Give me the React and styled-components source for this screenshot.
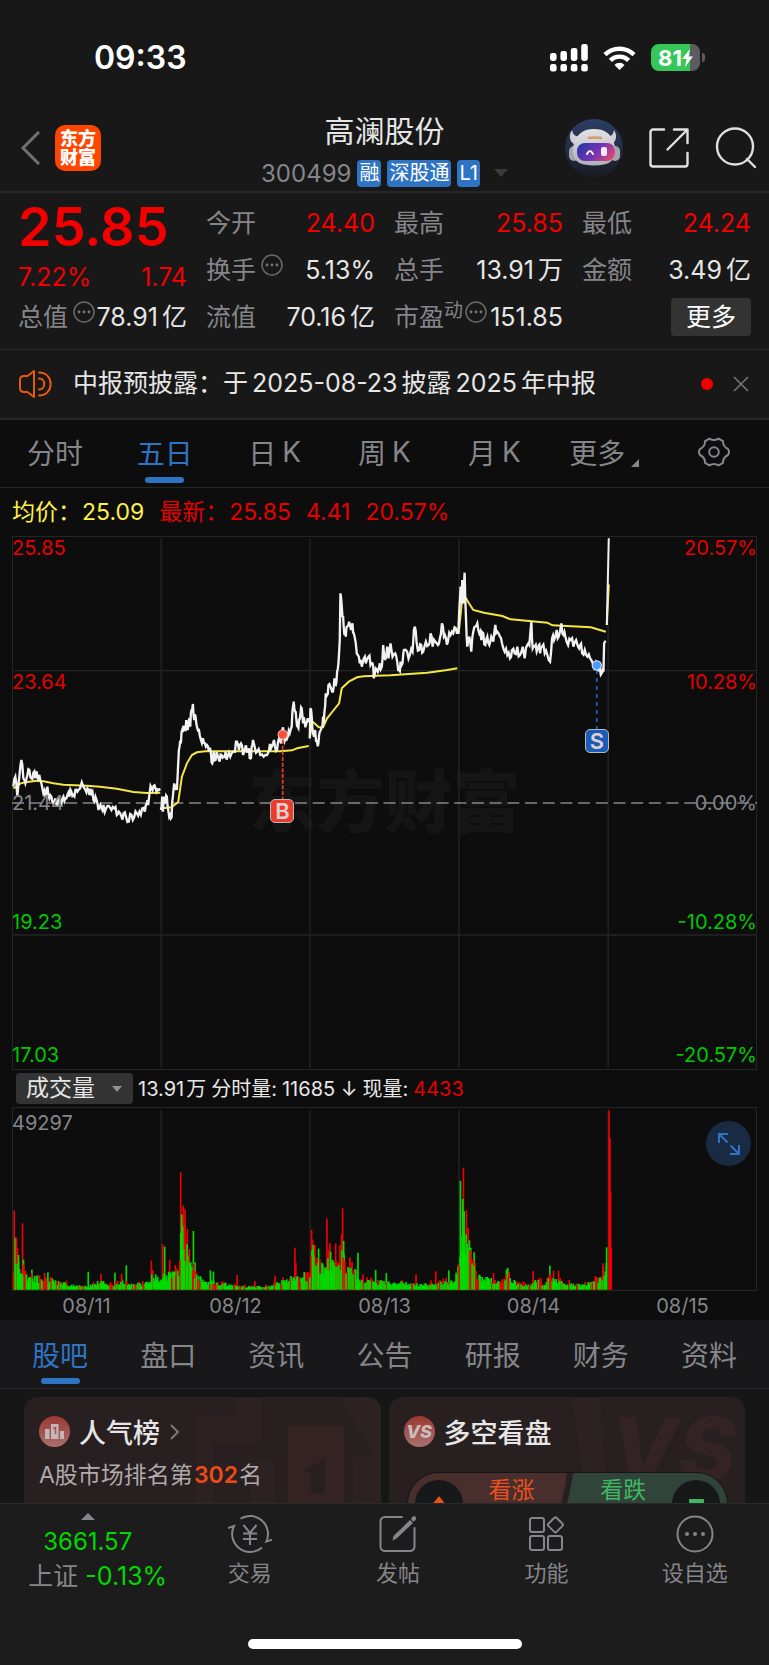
import React from 'react'
import styled, { createGlobalStyle } from 'styled-components'

const GlobalStyle = createGlobalStyle`
    * {
        box-sizing: border-box;
    }

    body {
        margin: 0;
        background-color: #0d0d0d;
        color: #e6e6e6;
        font-family: Inter, 'Noto Sans CJK SC', sans-serif;
    }

    button, select {
        font: inherit;
        color: inherit;
        border: none;
        background: none;
        padding: 0;
        margin: 0;
    }

    svg {
        display: block;
    }
`;

/* ---------- data ---------- */

const periods = [['分时'], ['五日'], ['日', 'K'], ['周', 'K'], ['月', 'K'], ['更多']];
const sections = ['股吧', '盘口', '资讯', '公告', '研报', '财务', '资料'];
const days = ['08/11', '08/12', '08/13', '08/14', '08/15'];

const quotes = [
    { label: '今开', value: '24.40', red: true },
    { label: '最高', value: '25.85', red: true },
    { label: '最低', value: '24.24', red: true },
    { label: '换手', value: '5.13%', more: true },
    { label: '总手', value: '13.91', unit: '万' },
    { label: '金额', value: '3.49', unit: '亿' },
];

// price lines, one string of x,y pairs per trading day
const priceDays = [
    '40,770 46,740 52,800 58,740 64,690 70,745 76,760 82,735 88,720 94,745 100,728 106,745 112,735 118,735 124,760 130,790 136,800 142,770 148,805 154,800 160,820 166,805 172,825 178,815 184,820 190,800 196,805 202,795 208,800 214,785 220,795 226,780 232,785 240,775 250,770 256,780 262,775 268,795 274,790 280,810 286,800 292,820 298,830 304,835 310,825 318,835 326,828 334,840 342,835 350,855 356,845 364,860 370,850 378,862 386,875 394,855 402,862 410,850 418,845 426,835 434,845 440,820 444,825 448,790 454,775 460,768 466,775 472,778 480,776',
    '482,840 486,800 488,845 492,800 496,815 500,800 504,840 510,855 514,862 518,800 522,760 526,770 530,780 534,700 538,650 542,640 546,600 550,590 554,600 558,570 562,600 566,570 570,590 574,540 578,522 582,570 586,560 590,590 596,600 602,630 608,625 614,640 620,645 626,665 632,670 636,700 640,665 646,690 652,675 658,695 664,675 670,680 676,665 682,680 690,680 698,665 704,665 710,635 716,660 722,640 728,675 734,655 740,665 746,655 750,685 754,650 758,630 764,655 770,665 780,675 790,680 800,675 806,660 812,655 818,640 824,650 830,660 836,625 842,640 846,600 850,615 856,625 862,620 868,610 874,590 876,545 880,515 884,545 888,570 892,590 896,570 900,555 904,535 908,580 912,570 918,580 922,565 926,570',
    '928,625 930,535 934,560 938,610 944,600 950,635 954,640 958,605 964,590 968,560 970,580 974,530 976,490 980,495 984,465 990,470 995,485 1000,470 1002,445 1006,465 1010,425 1014,400 1018,330 1020,190 1024,230 1028,260 1032,315 1036,320 1040,290 1046,275 1052,300 1056,280 1060,310 1066,340 1072,375 1078,400 1084,410 1090,385 1096,400 1104,380 1110,405 1116,400 1120,445 1126,415 1132,425 1138,400 1144,410 1148,345 1154,390 1160,350 1164,385 1170,340 1176,380 1184,370 1190,395 1196,420 1200,395 1206,400 1210,360 1220,365 1228,375 1236,365 1240,300 1243,290 1248,335 1256,360 1262,345 1268,365 1276,335 1284,345 1290,310 1296,350 1304,335 1312,345 1318,325 1324,280 1330,320 1336,325 1342,335 1350,315 1358,310 1366,295 1372,297',
    '1373,310 1376,240 1380,170 1383,220 1385,150 1388,220 1392,128 1396,260 1400,350 1406,320 1412,365 1418,305 1424,290 1430,280 1436,310 1442,330 1448,310 1454,345 1460,320 1466,345 1472,320 1478,335 1484,285 1490,305 1498,320 1504,340 1512,365 1520,375 1528,385 1534,360 1542,370 1550,350 1558,375 1566,350 1572,385 1580,345 1586,345 1592,275 1596,355 1602,350 1608,365 1614,345 1618,370 1624,350 1632,370 1640,375 1648,395 1654,325 1660,330 1668,300 1674,320 1682,280 1688,315 1694,320 1702,345 1710,330 1718,350 1726,330 1732,350 1738,345 1744,370 1752,360 1760,380 1768,385 1776,400 1784,400 1790,425 1796,410 1804,428 1808,425 1810,340 1815,333',
];

const averageDays = [
    '40,775 50,770 62,760 76,757 110,752 130,754 160,760 190,764 260,767 300,770 350,776 400,786 440,789 480,788',
    '486,835 514,832 534,816 545,740 560,700 575,675 590,667 615,664 840,664 875,661 890,655 925,648',
    '928,625 936,575 942,580 955,592 968,592 980,565 1000,540 1016,520 1024,475 1045,455 1070,442 1090,439 1170,436 1280,428 1340,420 1370,415',
    '1374,312 1384,215 1396,205 1405,220 1418,240 1450,248 1505,258 1530,268 1640,278 1655,286 1770,292 1815,305',
    '1818,285 1824,163',
];

// [x, height] of the usual volume along the five days
const volumeLevels = [
    [40, 60], [46, 120], [58, 90], [70, 80], [80, 40], [140, 38], [180, 26], [210, 16], [260, 10], [300, 28],
    [330, 16], [370, 26], [400, 16], [440, 22], [456, 52], [480, 42], [500, 50], [535, 60], [542, 220], [555, 140],
    [575, 70], [590, 44], [620, 26], [670, 20], [720, 11], [800, 11], [850, 28], [880, 42], [900, 36], [925, 50],
    [936, 130], [950, 90], [975, 70], [990, 110], [1004, 65], [1025, 115], [1040, 75], [1070, 54], [1090, 30], [1150, 26],
    [1200, 24], [1250, 18], [1310, 22], [1360, 30], [1374, 70], [1382, 240], [1396, 160], [1412, 110], [1425, 50], [1460, 34],
    [1500, 26], [1520, 44], [1545, 22], [1585, 14], [1600, 32], [1630, 20], [1650, 42], [1680, 24], [1750, 16], [1790, 34],
    [1810, 54], [1818, 90],
];

const volumePeaks = [
    [42, 237, 'r'], [45, 156, 'g'], [52, 125, 'r'], [55, 104, 'g'], [67, 199, 'r'], [70, 90, 'g'], [95, 60, 'g'], [143, 52, 'g'], [264, 54, 'g'],
    [302, 48, 'r'], [344, 51, 'g'], [364, 48, 'r'], [378, 73, 'g'], [453, 87, 'r'], [487, 136, 'r'], [493, 129, 'g'], [508, 90, 'r'],
    [525, 74, 'r'], [541, 352, 'r'], [544, 226, 'g'], [549, 252, 'r'], [554, 240, 'r'], [551, 200, 'r'], [561, 182, 'r'], [560, 136, 'g'],
    [567, 122, 'r'], [579, 176, 'g'], [584, 82, 'g'], [630, 58, 'g'], [639, 54, 'g'], [710, 44, 'r'], [763, 26, 'r'], [824, 42, 'r'],
    [883, 126, 'r'], [886, 80, 'r'], [911, 53, 'g'], [933, 179, 'r'], [936, 150, 'r'], [938, 134, 'g'], [954, 123, 'g'], [979, 213, 'r'],
    [985, 118, 'r'], [990, 114, 'g'], [1005, 138, 'r'], [1026, 244, 'r'], [1023, 165, 'r'], [1029, 146, 'g'], [1072, 111, 'g'],
    [1125, 59, 'g'], [1157, 50, 'g'], [1246, 46, 'r'], [1305, 55, 'r'], [1344, 58, 'g'], [1373, 76, 'r'], [1379, 326, 'g'], [1388, 366, 'r'],
    [1386, 272, 'g'], [1390, 235, 'g'], [1397, 238, 'r'], [1406, 148, 'g'], [1410, 126, 'g'], [1420, 112, 'g'], [1478, 50, 'r'], [1521, 65, 'g'],
    [1517, 60, 'g'], [1597, 56, 'r'], [1647, 72, 'g'], [1658, 58, 'r'], [1673, 57, 'r'], [1806, 79, 'r'], [1817, 127, 'g'],
    [1824, 538, 'r'], [1827, 455, 'r'], [1829, 293, 'r'], [1831, 127, 'r'],
];

// repeatable noise between 0 and 1
const noise = (n) => {
    const v = Math.sin(n * 127.1 + 11.7) * 43758.5453;
    return v - Math.floor(v);
};

const roughen = (line) => {
    const pts = line.split(' ').map((p) => p.split(',').map(Number));
    const out = [];
    pts.forEach(([x, y], i) => {
        out.push(`${x},${y}`);
        const next = pts[i + 1];
        if (next && next[0] - x >= 4) {
            const mid = (y + next[1]) / 2 + (noise(x) - 0.5) * 34;
            out.push(`${(x + next[0]) / 2},${Math.round(mid)}`);
        }
    });
    return out.join(' ');
};

const levelAt = (x) => {
    const i = volumeLevels.findIndex((l) => l[0] >= x);
    if (i < 1) return volumeLevels[0][1];
    const [x0, h0] = volumeLevels[i - 1];
    const [x1, h1] = volumeLevels[i];
    return h0 + ((h1 - h0) * (x - x0)) / (x1 - x0);
};

const volumeBars = [...volumePeaks];
for (let x = 40; x < 1818; x += 3) {
    const green = noise(x + 5) > 0.3;
    const h = levelAt(x) * (green ? 0.5 + noise(x) * 0.6 : 0.6 + noise(x) * 0.8);
    volumeBars.push([x, Math.max(5, Math.round(h)), green ? 'g' : 'r']);
}
// tall bars go behind the short ones
volumeBars.sort((a, b) => b[1] - a[1]);

/* ---------- status bar and header ---------- */

const Page = styled.div`
    display: flex;
    flex-direction: column;
    min-height: 100vh;
    overflow: hidden;
`;

const StatusBar = styled.div`
    display: flex;
    align-items: center;
    justify-content: space-between;
    height: 105px;
    padding: 10px 64px 0 94px;
    background-color: #181818;
`;

const Clock = styled.span`
    color: white;
    font-size: 32px;
    font-weight: 600;
`;

const StatusIcons = styled.div`
    display: flex;
    align-items: center;
    gap: 15px;
`;

const Battery = styled.div`
    display: flex;
    align-items: center;
    gap: 2px;

    &::after {
        content: '';
        width: 3px;
        height: 9px;
        border-radius: 0 3px 3px 0;
        background-color: #5c5c5e;
    }
`;

const BatteryBody = styled.div`
    display: flex;
    align-items: center;
    justify-content: center;
    width: 49px;
    height: 27px;
    border-radius: 8px;
    background: linear-gradient(90deg, #35c759 80%, #5c5c5e 80%);
    color: white;
    font-size: 22px;
    font-weight: 700;
`;

const Header = styled.header`
    display: grid;
    grid-template-columns: 1fr auto 1fr;
    align-items: center;
    height: 88px;
    padding: 0 12px;
    background-color: #181818;
    border-bottom: 2px solid #262626;
`;

const HeaderSide = styled.div`
    display: flex;
    align-items: center;
    justify-content: ${(props) => (props.$end ? 'flex-end' : 'flex-start')};
    gap: ${(props) => (props.$end ? '26px' : '14px')};
    padding-left: ${(props) => (props.$end ? '0' : '8px')};
`;

const IconButton = styled.button`
    display: flex;
    align-items: center;
    justify-content: center;
    cursor: pointer;
`;

const Logo = styled.a`
    display: flex;
    align-items: center;
    justify-content: center;
    width: 46px;
    height: 46px;
    border-radius: 10px;
    background-color: #ff4600;
    color: white;
    font-size: 18px;
    font-weight: 900;
    line-height: 19px;
    text-align: center;
    text-decoration: none;
`;

const Heading = styled.div`
    padding-top: 7px;
`;

const Title = styled.h1`
    margin: 0;
    color: #e6e6e6;
    font-size: 30px;
    font-weight: 400;
    line-height: 38px;
    text-align: center;
`;

const TitleRow = styled.div`
    display: flex;
    align-items: center;
    justify-content: center;
    gap: 6px;
    height: 41px;
    padding-top: 5px;
    color: #85858a;
    font-size: 24px;
`;

const Tag = styled.span`
    height: 27px;
    padding: 0 2px;
    border-radius: 4px;
    background-color: #2f74c4;
    color: white;
    font-size: 20px;
    line-height: 27px;
`;

const Caret = styled.i`
    width: 0;
    height: 0;
    margin-left: ${(props) => props.$gap || 0}px;
    border-left: ${(props) => props.$size}px solid transparent;
    border-right: ${(props) => props.$size}px solid transparent;
    border-top: ${(props) => (props.$up ? 0 : props.$size + 1)}px solid ${(props) => props.$color};
    border-bottom: ${(props) => (props.$up ? props.$size : 0)}px solid ${(props) => props.$color};
`;

/* ---------- quote ---------- */

const Quote = styled.section`
    display: grid;
    grid-template-columns: repeat(4, 1fr);
    grid-template-rows: repeat(3, 47px);
    column-gap: 19px;
    padding: 6px 18px 9px;
    background-color: #181818;
    border-bottom: 1px solid #262626;
    font-size: 25px;
`;

const Latest = styled.div`
    grid-row: 1 / 3;
    display: flex;
    flex-direction: column;
    color: #f20000;
`;

const Price = styled.strong`
    font-size: 54px;
    font-weight: 600;
    line-height: 56px;
`;

const Change = styled.div`
    display: flex;
    justify-content: space-between;
    line-height: 44px;
`;

const Cell = styled.div`
    display: flex;
    align-items: center;
    justify-content: space-between;
    white-space: nowrap;
    line-height: 36px;
`;

const CellLabel = styled.span`
    display: flex;
    align-items: center;
    color: #85858a;

    sup {
        font-size: 19px;
        line-height: 24px;
        align-self: flex-start;
    }

    svg {
        margin: 0 0 10px ${(props) => (props.$tight ? 2 : 5)}px;
    }
`;

const Value = styled.span`
    display: flex;
    gap: 4px;
    color: ${(props) => (props.$red ? '#f20000' : '#e6e6e6')};
`;

const MoreButton = styled.button`
    width: 80px;
    height: 38px;
    border-radius: 4px;
    background-color: #333;
    color: #fff;
    margin-left: auto;
`;

const Notice = styled.section`
    display: flex;
    align-items: center;
    height: 70px;
    padding: 0 20px 0 19px;
    background-color: #181818;
    border-bottom: 2px solid #262626;
    color: #e6e6e6;
    font-size: 25px;

    p {
        flex: 1;
        margin: 0 0 0 21px;
        line-height: 34px;
        padding-bottom: 3px;
    }

    time {
        margin: 0 4px;
    }
`;

const Dot = styled.i`
    width: 12px;
    height: 12px;
    margin-right: 20px;
    border-radius: 50%;
    background-color: #f20000;
`;

/* ---------- tabs ---------- */

const Tabs = styled.nav`
    display: grid;
    grid-template-columns: repeat(7, 1fr);
    height: ${(props) => props.$height}px;
    padding: 0 ${(props) => props.$inset || 0}px;
    background-color: ${(props) => props.$bg};
    border-bottom: 1px solid #262628;
`;

const Tab = styled.button`
    position: relative;
    display: flex;
    align-items: center;
    justify-content: center;
    gap: 6px;
    padding-bottom: ${(props) => props.$raise || 0}px;
    color: ${(props) => (props.$active ? '#2f74c4' : '#85858a')};
    font-size: 28px;
    cursor: pointer;

    &::after {
        content: '';
        display: ${(props) => (props.$active ? 'block' : 'none')};
        position: absolute;
        bottom: 4px;
        width: 39px;
        height: 6px;
        border-radius: 3px;
        background-color: #2f74c4;
    }
`;

const Corner = styled.i`
    align-self: flex-end;
    margin-bottom: 17px;
    border-left: 8px solid transparent;
    border-bottom: 8px solid #85858a;
`;

/* ---------- charts ---------- */

const Legend = styled.div`
    display: flex;
    align-items: baseline;
    gap: 15px;
    height: 48px;
    padding: 8px 12px 0;
    color: #e60000;
    font-size: 23px;
    line-height: 32px;

    span {
        display: flex;
        align-items: baseline;
        gap: 1px;
    }

    span:first-child {
        color: #fff04a;
    }

    b {
        font-weight: 400;
    }
`;

const Plot = styled.div`
    position: relative;
    height: ${(props) => props.$height}px;
    margin: 0 12px;

    > svg {
        position: relative;
        width: 100%;
        height: 100%;
    }
`;

const AxisLabel = styled.span`
    position: absolute;
    top: ${(props) => props.$top}%;
    ${(props) => (props.$right ? 'right: 0;' : 'left: 0;')}
    margin-top: ${(props) => (props.$middle ? -12 : 0)}px;
    color: ${(props) => props.$color};
    font-size: 20px;
    line-height: 24px;
`;

const Watermark = styled.span`
    position: absolute;
    top: 218px;
    left: 0;
    right: 0;
    color: #151515;
    font-size: 68px;
    font-weight: 900;
    line-height: 96px;
    text-align: center;
`;

const TradeMark = styled.span`
    position: absolute;
    left: ${(props) => props.$left}%;
    top: ${(props) => props.$top}%;
    width: 24px;
    height: 24px;
    margin: -12px;
    border: 1px solid #b9b9b9;
    border-radius: 5px;
    background-color: ${(props) => props.$color};
    color: #e0d0d0;
    font-size: 22px;
    font-weight: 600;
    line-height: 22px;
    text-align: center;
`;

const VolumeBar = styled.div`
    display: flex;
    align-items: center;
    gap: 5px;
    height: 37px;
    padding: 0 16px;
    font-size: 20px;
    line-height: 28px;
    white-space: nowrap;

    span {
        display: flex;
        align-items: baseline;
        gap: 5px;
    }

    span:nth-of-type(1) {
        gap: 2px;
    }

    b, em {
        font-style: normal;
        font-weight: 400;
    }

    em {
        color: #e60000;
    }
`;

const Picker = styled.label`
    position: relative;
    display: flex;
    align-items: center;

    select {
        appearance: none;
        width: 117px;
        height: 31px;
        padding-left: 10px;
        border-radius: 4px;
        background-color: #333;
        font-size: 23px;
        line-height: 31px;
    }

    i {
        position: absolute;
        right: 11px;
    }
`;

const ExpandButton = styled.button`
    position: absolute;
    top: 14px;
    right: 6px;
    display: flex;
    align-items: center;
    justify-content: center;
    width: 45px;
    height: 45px;
    border-radius: 50%;
    background-color: #182b42;
`;

const Days = styled.div`
    display: grid;
    grid-template-columns: repeat(5, 1fr);
    height: 29px;
    margin: 0 12px;
    color: #85858a;
    font-size: 20px;
    line-height: 30px;
    text-align: center;
`;

/* ---------- cards ---------- */

const Cards = styled.section`
    display: grid;
    grid-template-columns: 1fr 1fr;
    gap: 8px;
    height: 114px;
    padding: 8px 24px 0;
    overflow: hidden;
    background-color: #161616;
`;

const Card = styled.article`
    position: relative;
    height: 180px;
    padding: 14px 15px;
    border-radius: 14px;
    overflow: hidden;
    background-color: #271f20;
`;

const CardArt = styled.svg`
    position: absolute;
    top: 0;
    right: 0;
`;

const CardTitle = styled.h2`
    position: relative;
    display: flex;
    align-items: center;
    gap: 9px;
    margin: 0;
    height: 41px;
    color: #e6e6e6;
    font-size: 27px;
    font-weight: 500;
`;

const CardText = styled.p`
    position: relative;
    margin: 6px 0 0;
    color: #b0aaaa;
    font-size: 23px;
    line-height: 34px;

    strong {
        margin: 0 1px;
        color: #ec4a18;
        font-weight: 600;
    }
`;

const Vote = styled.div`
    position: relative;
    display: flex;
    height: 64px;
    margin: 20px 2px 0 3px;
    border-radius: 32px;
    overflow: hidden;
    border: 1px solid #151515;
`;

const VoteButton = styled.button`
    display: flex;
    flex: 1;
    flex-direction: ${(props) => (props.$down ? 'row-reverse' : 'row')};
    padding: 5px 7px 0;
    background-color: ${(props) => (props.$down ? '#31443a' : '#482f2e')};
    color: ${(props) => (props.$down ? '#3fb765' : '#ea4f1c')};
    font-size: 23px;
    line-height: 24px;
    clip-path: ${(props) => (props.$down ? 'polygon(6px 0, 100% 0, 100% 100%, -6px 100%)' : 'polygon(0 0, 100% 0, calc(100% - 12px) 100%, 0 100%)')};

    span {
        flex: 1;
    }
`;

const VoteIcon = styled.svg`
    margin-top: 2px;
    border-radius: 50%;
    background-color: #17181a;
`;

/* ---------- bottom bar ---------- */

const BottomBar = styled.footer`
    flex: 1;
    display: flex;
    flex-direction: column;
    align-items: center;
    min-height: 162px;
    background-color: #1c1c1c;
    border-top: 1px solid #2a2a2a;
`;

const BottomItems = styled.div`
    display: grid;
    grid-template-columns: 175fr repeat(4, 148fr);
    width: 100%;
    height: 135px;
`;

const Index = styled.button`
    display: flex;
    flex-direction: column;
    align-items: center;
    padding-top: 9px;
    color: #00d800;
    font-size: 24px;
    line-height: 34px;

    i {
        margin-bottom: 5px;
    }

    small {
        margin-left: 20px;
        font-size: 25px;
        white-space: nowrap;
    }

    small b {
        color: #85858a;
        font-weight: 400;
    }
`;

const BottomItem = styled.button`
    display: flex;
    flex-direction: column;
    align-items: center;
    padding-top: 10px;
    color: #85858a;
    font-size: 22px;
    line-height: 34px;

    svg {
        margin-bottom: 2px;
    }
`;

const HomeBar = styled.div`
    width: 274px;
    height: 10px;
    border-radius: 5px;
    background-color: white;
`;

/* ---------- icons ---------- */

const MoreDots = () => (
    <svg width="22" height="22" viewBox="0 0 22 22" fill="#77777b">
        <circle cx="11" cy="11" r="10" fill="none" stroke="#68686b" strokeWidth="1.500" />
        <circle cx="6" cy="11" r="1.400" />
        <circle cx="11" cy="11" r="1.400" />
        <circle cx="16" cy="11" r="1.400" />
    </svg>
);

const Signal = () => (
    <svg width="38" height="28" viewBox="0 0 38 28" fill="white">
        {[[9, 8], [7, 10], [4, 13], [0, 17]].map(([y, h], i) => (
            <rect key={y} x={i * 10.4} y={y} width="6.600" height={h} rx="2.400" />
        ))}
        {[0, 1, 2, 3].map((i) => <rect key={i} x={i * 10.4} y="20" width="6.600" height="7.600" rx="2.400" />)}
    </svg>
);

const Wifi = () => (
    <svg width="33" height="26" viewBox="0 0 34 26">
        <g fill="none" stroke="white" strokeWidth="4.600">
            <path d="M2 9.500a21.500 21.500 0 0 1 30 0" />
            <path d="M7.600 15.400a13.500 13.500 0 0 1 18.800 0" />
        </g>
        <path d="M17 25.400l-5.200-5.300a7.500 7.500 0 0 1 10.400 0z" fill="white" />
    </svg>
);

const Robot = () => (
    <svg width="58" height="58" viewBox="0 0 58 58">
        <defs>
            <linearGradient id="sky" x2="0" y2="1">
                <stop offset="0" stopColor="#2c3e66" />
                <stop offset="1" stopColor="#1a1c24" />
            </linearGradient>
            <linearGradient id="visor" x1="0" y1=".3" x2="1" y2=".7">
                <stop offset="0" stopColor="#2b38a8" />
                <stop offset=".5" stopColor="#7431b5" />
                <stop offset="1" stopColor="#e04a70" />
            </linearGradient>
            <linearGradient id="shell" x2="0" y2="1">
                <stop offset="0" stopColor="#e2e2e5" />
                <stop offset="1" stopColor="#b0b0b8" />
            </linearGradient>
        </defs>
        <circle cx="29" cy="29" r="29" fill="url(#sky)" />
        <path d="M7 11c-4 6-2 13 4 15l6-8c-6 0-9-2-10-7z" fill="#cfcfd6" />
        <path d="M49 11c4 6 2 13-4 15l-5-8c6 0 8-2 9-7z" fill="#cfcfd6" />
        <rect x="4" y="27" width="10" height="15" rx="5" fill="#a4a4b0" />
        <rect x="45" y="27" width="10" height="15" rx="5" fill="#a4a4b0" />
        <path d="M17 13c5-4 19-4 24 0 7 4 10 14 9 21-1 9-8 12.500-21 12.500S9 43 8 34c-1-8 3-17 9-21z" fill="url(#shell)" />
        <rect x="12" y="24" width="38" height="18" rx="8" fill="url(#visor)" />
        <path d="M23 19q6-1 14 0" stroke="#d99a6a" strokeWidth="2.400" fill="none" />
        <path d="M22 35q3-6 6 0" stroke="white" strokeWidth="2" fill="none" strokeLinecap="round" />
        <rect x="36" y="28" width="6" height="9" rx="2" fill="#f2e8ff" />
    </svg>
);

const ShareIcon = () => (
    <svg width="40" height="40" viewBox="0 0 40 40" fill="none" stroke="#e0e0e0" strokeWidth="2.400" strokeLinecap="round" strokeLinejoin="round">
        <path d="M15 1.500H4A2.500 2.500 0 0 0 1.500 4v32A2.500 2.500 0 0 0 4 38.500h32a2.500 2.500 0 0 0 2.500-2.500V25" />
        <path d="M25 1.500h13.500V15M38 2L18.500 21.500" />
    </svg>
);

const SearchIcon = () => (
    <svg width="42" height="42" viewBox="0 0 42 42" fill="none" stroke="#e0e0e0" strokeWidth="2.400" strokeLinecap="round">
        <circle cx="20" cy="19.500" r="18" />
        <path d="M32 32l8 8" />
    </svg>
);

const Speaker = () => (
    <svg width="33" height="28" viewBox="0 0 33 28" fill="none" stroke="#e8590c" strokeWidth="2" strokeLinecap="round" strokeLinejoin="round">
        <path d="M5 6h3.500L15 1v26l-6.500-5H5q-4 0-4-4v-8q0-4 4-4z" />
        <path d="M20 2.500c15.500 0 15.500 23 0 23M20 8.500c7 0 7 11 0 11" />
    </svg>
);

const Gear = () => (
    <svg width="32" height="32" viewBox="0 0 32 32" fill="none" stroke="#85858a" strokeWidth="2" strokeLinejoin="round">
        <path d="M11.500 2.600Q16 5.600 20.500 2.600L25 5.200Q24.700 10.400 30 13Q32 16 30 19Q24.700 21.600 25 26.800L20.500 29.400Q16 26.400 11.500 29.400L7 26.800Q7.300 21.600 2 19Q0 16 2 13Q7.300 10.400 7 5.200Z" />
        <circle cx="16" cy="16" r="4.800" />
    </svg>
);

const TradeIcon = () => (
    <svg width="44" height="40" viewBox="0 0 44 40" fill="none" stroke="#85858a" strokeWidth="2">
        <path d="M12.500 4.700A18 18 0 0 1 38.300 27.600l5.700-2" />
        <path d="M34 33.500A18 18 0 0 1 6 12l-6 2" />
        <path d="M15.500 11l6.500 8 6.500-8M22 19v12M15 19.500h14M15 25h14" />
    </svg>
);

const PostIcon = () => (
    <svg width="40" height="40" viewBox="0 0 40 40" fill="none" stroke="#85858a" strokeWidth="2" strokeLinecap="round">
        <path d="M24 3H7a4.500 4.500 0 0 0-4.500 4.500v25A4.500 4.500 0 0 0 7 37h25a4.500 4.500 0 0 0 4.500-4.500V14" />
        <path d="M14.500 26.500L15.500 22 32 6l3 3-16.500 15.500z" fill="#85858a" stroke="none" />
        <path d="M35.500 5l.5-.5" strokeWidth="4.500" />
    </svg>
);

const ToolsIcon = () => (
    <svg width="40" height="40" viewBox="0 0 40 40" fill="none" stroke="#85858a" strokeWidth="2">
        <rect x="4" y="4" width="14" height="14" rx="2" />
        <rect x="4" y="22" width="14" height="14" rx="2" />
        <rect x="22" y="22" width="14" height="14" rx="2" />
        <rect x="23.500" y="5" width="11.500" height="11.500" rx="1.500" transform="rotate(45 29.250 11)" />
    </svg>
);

const MenuIcon = () => (
    <svg width="40" height="40" viewBox="0 0 40 40" fill="#85858a">
        <circle cx="20" cy="20" r="17.500" fill="none" stroke="#85858a" strokeWidth="2" />
        <circle cx="12" cy="20" r="2" />
        <circle cx="20" cy="20" r="2" />
        <circle cx="28" cy="20" r="2" />
    </svg>
);

const Badge = styled.span`
    display: flex;
    align-items: center;
    justify-content: center;
    width: 31px;
    height: 31px;
    border-radius: 50%;
    background: linear-gradient(#9c3732, #a9706e);
    color: #cbbcbb;
    font-size: 18px;
    font-style: italic;
    font-weight: 800;
    line-height: 31px;
`;

/* ---------- charts ---------- */

const PriceChart = () => (
    <Plot $height={534}>
        <Watermark>东方财富</Watermark>
        <svg viewBox="36 18 2232 1602" preserveAspectRatio="none" fill="none">
            <g stroke="#252525" strokeWidth="3">
                <rect x="37.500" y="19.500" width="2229" height="1599" />
                <path d="M36 422H2268M36 1215H2268" strokeWidth="4" />
                <path d="M483 24V1614M929 24V1614M1375 24V1614M1822 24V1614" strokeWidth="4" />
            </g>
            <path d="M36 819H2268" stroke="#85858a" strokeWidth="5" strokeDasharray="36 17" />
            {averageDays.map((d) => <polyline key={d} points={d} stroke="#f5e642" strokeWidth="6" />)}
            {priceDays.map((d) => <polyline key={d} points={roughen(d)} stroke="#f2f2f2" strokeWidth="7" />)}
            <path d="M1818 285L1824 25" stroke="#f2f2f2" strokeWidth="6" />
            <path d="M847 630V810" stroke="#ef3b2c" strokeWidth="5" strokeDasharray="12 5" />
            <path d="M1788 420V600" stroke="#1c62c4" strokeWidth="5" strokeDasharray="12 12" />
            <circle cx="847" cy="614" r="14" fill="#ff4b3a" stroke="#e8c4be" strokeWidth="3" />
            <circle cx="1788" cy="406" r="14" fill="#4b9bff" stroke="#e6eefc" strokeWidth="3" />
        </svg>
        <AxisLabel $top={0} $color="#e60000">25.85</AxisLabel>
        <AxisLabel $top={25} $color="#e60000">23.64</AxisLabel>
        <AxisLabel $top={50} $middle $color="#85858a">21.44</AxisLabel>
        <AxisLabel $top={70} $color="#00c800">19.23</AxisLabel>
        <AxisLabel $top={95} $color="#00c800">17.03</AxisLabel>
        <AxisLabel $right $top={0} $color="#e60000">20.57%</AxisLabel>
        <AxisLabel $right $top={25} $color="#e60000">10.28%</AxisLabel>
        <AxisLabel $right $top={50} $middle $color="#85858a">0.00%</AxisLabel>
        <AxisLabel $right $top={70} $color="#00c800">-10.28%</AxisLabel>
        <AxisLabel $right $top={95} $color="#00c800">-20.57%</AxisLabel>
        <TradeMark $left={36.3} $top={51.5} $color="#ee3a2b">B</TradeMark>
        <TradeMark $left={78.5} $top={38.4} $color="#1a5cba">S</TradeMark>
    </Plot>
);

const VolumeChart = () => (
    <Plot $height={184}>
        <svg viewBox="36 141 2232 552" preserveAspectRatio="none" fill="none">
            <g stroke="#252525" strokeWidth="3">
                <rect x="37.500" y="142.500" width="2229" height="549" />
                <path d="M483 150V690M929 150V690M1375 150V690M1822 150V690" strokeWidth="4" />
            </g>
            {volumeBars.map(([x, h, c], i) => (
                <rect key={i} x={x - 2} y={689 - h} width="5" height={h} fill={c === 'r' ? '#f00000' : '#00dc00'} />
            ))}
        </svg>
        <AxisLabel $top={2} $color="#85858a">49297</AxisLabel>
        <ExpandButton aria-label="全屏">
            <svg width="22" height="22" viewBox="0 0 22 22" fill="none" stroke="#2f74c4" strokeWidth="2">
                <path d="M1 10V1h9M1 1l8.500 8.500M21 12v9h-9M21 21l-8.500-8.500" />
            </svg>
        </ExpandButton>
    </Plot>
);

const App = () => {
    return (
        <Page>
            <GlobalStyle />
            <StatusBar>
                <Clock>09:33</Clock>
                <StatusIcons>
                    <Signal />
                    <Wifi />
                    <Battery>
                        <BatteryBody>
                            81
                            <svg width="11" height="18" viewBox="0 0 11 18" fill="white">
                                <path d="M8 0L0 10h4.500L3 18 11 7.500H6.500z" />
                            </svg>
                        </BatteryBody>
                    </Battery>
                </StatusIcons>
            </StatusBar>

            <Header>
                <HeaderSide>
                    <IconButton aria-label="返回">
                        <svg width="21" height="34" viewBox="0 0 21 34" fill="none" stroke="#707070" strokeWidth="3">
                            <path d="M19 1L3 17l16 16" />
                        </svg>
                    </IconButton>
                    <Logo href="#home">东方<br />财富</Logo>
                </HeaderSide>
                <Heading>
                    <Title>高澜股份</Title>
                    <TitleRow>
                        300499
                        <Tag>融</Tag>
                        <Tag>深股通</Tag>
                        <Tag>L1</Tag>
                        <Caret $size={7} $gap={8} $color="#3a3a3a" />
                    </TitleRow>
                </Heading>
                <HeaderSide $end>
                    <IconButton aria-label="助手"><Robot /></IconButton>
                    <IconButton aria-label="分享"><ShareIcon /></IconButton>
                    <IconButton aria-label="搜索"><SearchIcon /></IconButton>
                </HeaderSide>
            </Header>

            <Quote>
                <Latest>
                    <Price>25.85</Price>
                    <Change><span>7.22%</span><span>1.74</span></Change>
                </Latest>
                {quotes.map((q) => (
                    <Cell key={q.label}>
                        <CellLabel>{q.label}{q.more && <MoreDots />}</CellLabel>
                        <Value $red={q.red}>{q.value}{q.unit && <span>{q.unit}</span>}</Value>
                    </Cell>
                ))}
                <Cell>
                    <CellLabel>总值<MoreDots /></CellLabel>
                    <Value>78.91<span>亿</span></Value>
                </Cell>
                <Cell>
                    <CellLabel>流值</CellLabel>
                    <Value>70.16<span>亿</span></Value>
                </Cell>
                <Cell>
                    <CellLabel $tight>市盈<sup>动</sup><MoreDots /></CellLabel>
                    <Value>151.85</Value>
                </Cell>
                <Cell>
                    <MoreButton>更多</MoreButton>
                </Cell>
            </Quote>

            <Notice>
                <Speaker />
                <p>中报预披露：于<time>2025-08-23</time>披露<time>2025</time>年中报</p>
                <Dot />
                <IconButton aria-label="关闭">
                    <svg width="16" height="16" viewBox="0 0 16 16" stroke="#77777b" strokeWidth="1.500">
                        <path d="M1 1l14 14M15 1L1 15" />
                    </svg>
                </IconButton>
            </Notice>

            <Tabs $height={68} $bg="#0d0d0d">
                {periods.map(([name, unit]) => (
                    <Tab key={name} $active={name === '五日'} $raise={3}>
                        <span>{name}</span>
                        {unit && <span>{unit}</span>}
                        {name === '更多' && <Corner />}
                    </Tab>
                ))}
                <Tab aria-label="设置" $raise={3}><Gear /></Tab>
            </Tabs>

            <Legend>
                <span>均价：<b>25.09</b></span>
                <span>最新：<b>25.85</b></span>
                <span>4.41</span>
                <span>20.57%</span>
            </Legend>
            <PriceChart />

            <VolumeBar>
                <Picker>
                    <select aria-label="指标" defaultValue="成交量">
                        <option>成交量</option>
                        <option>成交额</option>
                    </select>
                    <Caret $size={5} $color="#909095" />
                </Picker>
                <span>13.91<b>万</b></span>
                <span>分时量: <b>11685 ↓</b></span>
                <span>现量: <em>4433</em></span>
            </VolumeBar>
            <VolumeChart />
            <Days>{days.map((d) => <span key={d}>{d}</span>)}</Days>

            <Tabs $height={69} $inset={6} $bg="#18181a">
                {sections.map((s) => <Tab key={s} $active={s === '股吧'}>{s}</Tab>)}
            </Tabs>

            <Cards>
                <Card>
                    <CardArt width="190" height="110" viewBox="0 0 190 110">
                        <path d="M5 18h40V0h25v45H22v65H5zM60 65h24v45H60zM150 0h40v110h-28V60h20z" fill="#2d2222" />
                        <path d="M97 28h56v82H97z" fill="#352223" />
                        <path d="M112 74l22-12v35h-14V76z" fill="#271f20" />
                    </CardArt>
                    <CardTitle>
                        <Badge>
                            <svg width="31" height="31" viewBox="0 0 31 31">
                                <path d="M6 13h4.500v10H6zM12 8h7.500v15H12zM21 15h4v8h-4z" fill="#c4b6b5" />
                                <path d="M14 12.500l2.500-1V18" fill="none" stroke="#a35552" strokeWidth="1.500" />
                            </svg>
                        </Badge>
                        人气榜
                        <svg width="11" height="16" viewBox="0 0 11 16" fill="none" stroke="#77777b" strokeWidth="2">
                            <path d="M2 1l7 7-7 7" />
                        </svg>
                    </CardTitle>
                    <CardText>A股市场排名第<strong>302</strong>名</CardText>
                </Card>
                <Card>
                    <CardArt width="175" height="110" viewBox="0 0 175 110" fontFamily="Inter" fontStyle="italic" fontWeight="800" aria-hidden="true">
                        <path d="M2 0h28l6 85H14z" fill="#2d2222" />
                        <text x="40" y="84" fontSize="88" fill="#332324">VS</text>
                    </CardArt>
                    <CardTitle>
                        <Badge>VS</Badge>
                        多空看盘
                    </CardTitle>
                    <Vote>
                        <VoteButton>
                            <VoteIcon width="48" height="48" viewBox="0 0 48 48"><path d="M24 16l8 10H16z" fill="#ea4f1c" /></VoteIcon>
                            <span>看涨</span>
                        </VoteButton>
                        <VoteButton $down>
                            <VoteIcon width="48" height="48" viewBox="0 0 48 48"><rect x="17" y="19" width="15" height="4" rx="1" fill="#3fb765" /></VoteIcon>
                            <span>看跌</span>
                        </VoteButton>
                    </Vote>
                </Card>
            </Cards>

            <BottomBar>
                <BottomItems>
                    <Index>
                        <Caret $up $size={7} $color="#85858a" />
                        <span>3661.57</span>
                        <small><b>上证</b> -0.13%</small>
                    </Index>
                    <BottomItem><TradeIcon />交易</BottomItem>
                    <BottomItem><PostIcon />发帖</BottomItem>
                    <BottomItem><ToolsIcon />功能</BottomItem>
                    <BottomItem><MenuIcon />设自选</BottomItem>
                </BottomItems>
                <HomeBar />
            </BottomBar>
        </Page>
    )
}

export default App
